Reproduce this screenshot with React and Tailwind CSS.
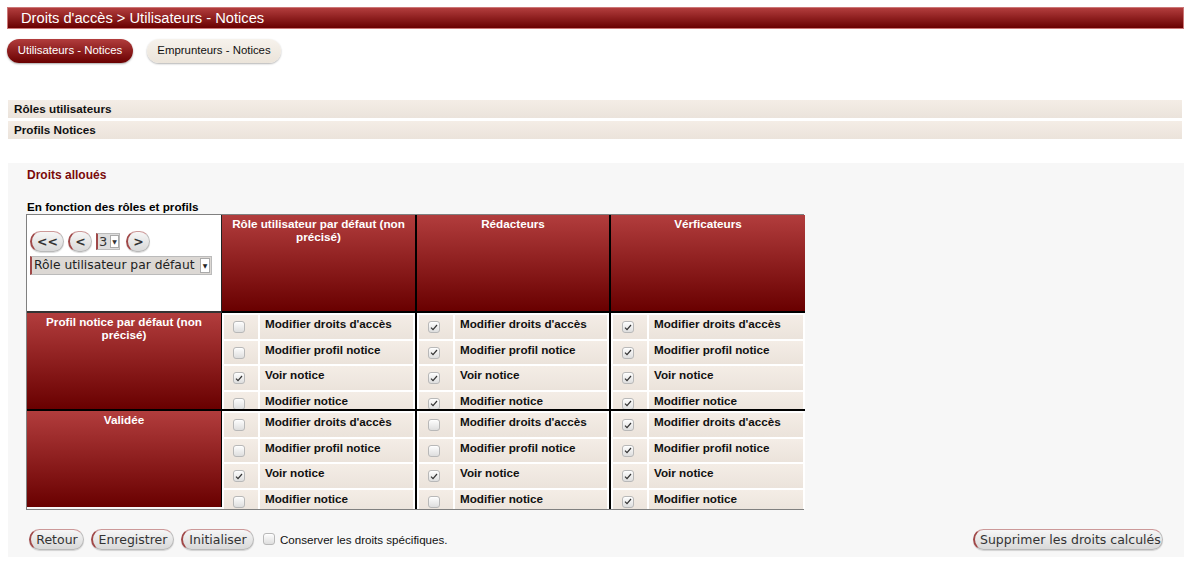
import React from "react";

const RED = "bg-[linear-gradient(to_bottom,#b23d3d,#690000)]";
const ROW = "bg-[linear-gradient(to_bottom,#f4ede6,#ebe3db)]";

function Check({ checked }) {
  return (
    <span className="mt-[6px] inline-flex h-[12px] w-[12px] items-center justify-center rounded-[3px] border border-[#b8b8b8] bg-[linear-gradient(to_bottom,#fdfdfd,#dedede)] shadow-[inset_0_1px_1px_rgba(255,255,255,0.8)]">
      {checked && (
        <svg width="8" height="7" viewBox="0 0 8 7">
          <path d="M1 3.6 L3 5.6 L7 1" fill="none" stroke="#333" strokeWidth="1.2" />
        </svg>
      )}
    </span>
  );
}

const LABELS = ["Modifier droits d'accès", "Modifier profil notice", "Voir notice", "Modifier notice"];

function Cell({ checks, border }) {
  return (
    <div className={`flex h-[98px] flex-col gap-[2px] overflow-hidden bg-white pl-[2px] pt-[2px] pr-[2px] ${border}`}>
      {LABELS.map((l, i) => (
        <div key={i} className="flex h-[23.5px] shrink-0 gap-[2px]">
          <div className={`flex w-[34px] shrink-0 justify-start pl-[9px] ${ROW}`}>
            <Check checked={checks[i]} />
          </div>
          <div className={`flex-1 pl-[5px] pt-[2px] text-[11.7px] font-bold leading-[14px] text-[#111] ${ROW}`}>{l}</div>
        </div>
      ))}
    </div>
  );
}

function Btn({ children, className = "" }) {
  return (
    <button
      className={`h-[21px] whitespace-nowrap rounded-[11px] border border-[#b9b9b9] border-l-[2px] border-l-[#a04848] border-t-[#c99] bg-[linear-gradient(to_bottom,#f6f6f6,#d9d9d9)] px-[5px] text-[12.5px] leading-[17px] text-[#333] shadow-[0_1px_1px_rgba(0,0,0,0.15)] ${className}`}
      style={{ fontFamily: '"DejaVu Sans", sans-serif' }}
    >
      {children}
    </button>
  );
}

export default function App() {
  const hdr = `${RED} text-white text-[11.7px] font-bold leading-[13px] text-center pt-[2px] px-[6px]`;
  return (
    <div className="min-h-[571px] bg-white pt-[7px]" style={{ fontFamily: '"Liberation Sans", Arial, sans-serif' }}>
      <div className={`ml-[7px] flex h-[22px] w-[1177px] items-center border border-[#c77] ${RED} pl-[13px] text-[14.7px] text-white`}>
        Droits d'accès &gt; Utilisateurs - Notices
      </div>

      <div className="ml-[7px] mt-[10px] flex gap-[14px]">
        <div className={`flex h-[24px] w-[126px] items-center justify-center rounded-[12px] ${RED} text-[11.4px] text-white shadow-[0_1px_2px_rgba(0,0,0,0.35)]`}>
          Utilisateurs - Notices
        </div>
        <div className="flex h-[24px] w-[134px] items-center justify-center rounded-[12px] bg-[linear-gradient(to_bottom,#f6f2ec,#ebe4da)] text-[11.4px] text-[#111] shadow-[0_1px_2px_rgba(0,0,0,0.3)]">
          Emprunteurs - Notices
        </div>
      </div>

      <div className="ml-[8px] mt-[37px] flex w-[1174px] flex-col gap-[3px]">
        <div className={`flex h-[18px] items-center pl-[6px] text-[11.7px] font-bold text-[#111] ${ROW}`}>Rôles utilisateurs</div>
        <div className={`flex h-[18px] items-center pl-[6px] text-[11.7px] font-bold text-[#111] ${ROW}`}>Profils Notices</div>
      </div>

      <div className="ml-[8px] mt-[24px] h-[394px] w-[1176px] bg-[#f7f7f7] pl-[18px] pt-[5px]">
        <div className="pl-[1px] text-[12px] font-bold leading-[14px] text-[#7a0a0a]">Droits alloués</div>
        <div className="mt-[18px] pl-[1px] text-[11.7px] font-bold leading-[14px] text-black">En fonction des rôles et profils</div>

        <div className="grid w-[778px] grid-cols-[195px_195px_194px_194px] border border-[#808080]">
          <div className="h-[98px] border-r border-r-[#222] border-b-[2px] border-b-[#333] bg-white pl-[3px] pt-[16px]">
            <div className="flex items-center gap-[4px]">
              <Btn className="w-[34px] px-0 font-bold">&lt;&lt;</Btn>
              <Btn className="w-[24px] px-0 font-bold">&lt;</Btn>
              <div className="flex h-[17px] w-[24px] items-center border border-[#bbb] border-l-[2px] border-l-[#a04848] bg-[#ddd] text-[13px] leading-[15px] text-[#333]" style={{ fontFamily: '"DejaVu Sans", sans-serif' }}>
                <span className="flex-1 pl-[1px]">3</span>
                <span className="flex h-[13px] w-[9px] items-center justify-center border border-[#aaa] bg-white text-[6px]">▼</span>
              </div>
              <Btn className="ml-[2px] w-[24px] px-0 font-bold">&gt;</Btn>
            </div>
            <div className="mt-[4px] flex h-[19px] w-[182px] items-center border border-[#bbb] border-l-[2px] border-l-[#a04848] bg-[#dcd8d4] text-[12.3px] text-[#222]" style={{ fontFamily: '"DejaVu Sans", sans-serif' }}>
              <span className="flex-1 whitespace-nowrap pl-[2px]">Rôle utilisateur par défaut</span>
              <span className="mr-[1px] flex h-[15px] w-[10px] items-center justify-center border border-[#aaa] bg-white text-[6px]">▼</span>
            </div>
          </div>
          <div className={`h-[98px] border-r-[2px] border-r-black border-b-[2px] border-b-black ${hdr}`}>Rôle utilisateur par défaut (non précisé)</div>
          <div className={`h-[98px] border-r-[2px] border-r-black border-b-[2px] border-b-black ${hdr}`}>Rédacteurs</div>
          <div className={`h-[98px] border-b-[2px] border-b-black ${hdr}`}>Vérficateurs</div>

          <div className={`h-[98px] border-r border-r-black border-b-[2px] border-b-black ${hdr}`}>Profil notice par défaut (non précisé)</div>
          <Cell checks={[false, false, true, false]} border="border-r-[2px] border-r-black border-b-[2px] border-b-black" />
          <Cell checks={[true, true, true, true]} border="border-r-[2px] border-r-black border-b-[2px] border-b-black" />
          <Cell checks={[true, true, true, true]} border="border-b-[2px] border-b-black" />

          <div className={`h-[96px] border-r border-r-black ${hdr}`}>Validée</div>
          <Cell checks={[false, false, true, false]} border="border-r-[2px] border-r-black" />
          <Cell checks={[false, false, true, false]} border="border-r-[2px] border-r-black" />
          <Cell checks={[true, true, true, true]} border="" />
        </div>

        <div className="mt-[19px] flex h-[21px] w-[1137px] items-center pl-[3px]">
          <Btn className="w-[55px]">Retour</Btn>
          <Btn className="ml-[7px] w-[83px]">Enregistrer</Btn>
          <Btn className="ml-[7px] w-[73px]">Initialiser</Btn>
          <div className="ml-[9px] flex h-[21px] items-start">
            <span className="-mt-[2px] flex"><Check checked={false} /></span>
          </div>
          <span className="ml-[5px] pt-[1px] text-[11.6px] leading-[14px] text-[#111]">Conserver les droits spécifiques.</span>
          <Btn className="ml-auto w-[190px] px-0">Supprimer les droits calculés</Btn>
        </div>
      </div>
    </div>
  );
}
